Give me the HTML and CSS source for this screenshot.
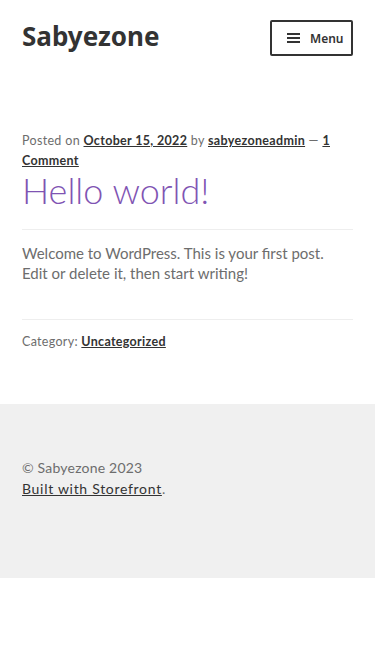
FILE: index.html
```html
<!DOCTYPE html>
<html>
<head>
    <title>Sabyezone</title>
    <link rel="stylesheet" href="styles.css">
</head>
<body>
    <header class="site-header">
        <div class="site-title">Sabyezone</div>
        <button class="menu-toggle">
            <svg width="13" height="10" viewBox="0 0 13 10"><rect y="0" width="13" height="2" fill="#333"/><rect y="4" width="13" height="2" fill="#333"/><rect y="8" width="13" height="2" fill="#333"/></svg>
            <span>Menu</span>
        </button>
    </header>

    <main class="content">
        <div class="posted-on">Posted on <a href="#">October 15, 2022</a> by <a href="#">sabyezoneadmin</a> — <a href="#">1 Comment</a></div>
        <h1 class="entry-title">Hello world!</h1>
        <div class="entry-content">
            <p>Welcome to WordPress. This is your first post. Edit or delete it, then start writing!</p>
        </div>
        <div class="cat-links">Category: <a href="#">Uncategorized</a></div>
    </main>

    <footer class="site-footer">
        <div>© Sabyezone 2023</div>
        <div><a href="#">Built with Storefront</a>.</div>
    </footer>
</body>
</html>
```

FILE: styles.css
```css
body { margin: 0; font-family: Lato, "Open Sans", sans-serif; color: #6d6d6d; background: #fff; }
a { color: #333; font-weight: 700; text-decoration: underline; }

.site-header { display: flex; justify-content: space-between; align-items: center; padding: 20px 22px 0 22px; height: 36px; }
.site-title { font-family: "Noto Sans", sans-serif; font-weight: 700; font-size: 26px; color: #333; margin-bottom: 4px; }
.menu-toggle { display: flex; align-items: center; gap: 10px; height: 36px; width: 83px; padding: 0 0 0 15px; border: 2px solid #333; border-radius: 2px; background: #fff; font-family: "Noto Sans", sans-serif; font-size: 12px; font-weight: 600; color: #333; box-sizing: border-box; }

.content { padding: 0 22px; margin-top: 75px; }
.posted-on { font-size: 12.5px; line-height: 20px; letter-spacing: 0.33px; }
.entry-title { margin: 0; font-size: 36px; font-weight: 300; color: #7f54b3; line-height: 38px; padding-bottom: 20px; border-bottom: 1px solid #eee; }
.entry-content { padding: 13px 0 36px; border-bottom: 1px solid #eee; }
.entry-content p { margin: 0; font-size: 15px; line-height: 20px; }
.cat-links { font-size: 12.5px; line-height: 20px; padding-top: 12px; letter-spacing: 0.3px; }

.site-footer { background: #f0f0f0; margin-top: 52px; padding: 53px 22px 80px; height: 41px; font-size: 14px; line-height: 21px; letter-spacing: 0.2px; }
.site-footer a { font-weight: 400; letter-spacing: 0.7px; }
```
